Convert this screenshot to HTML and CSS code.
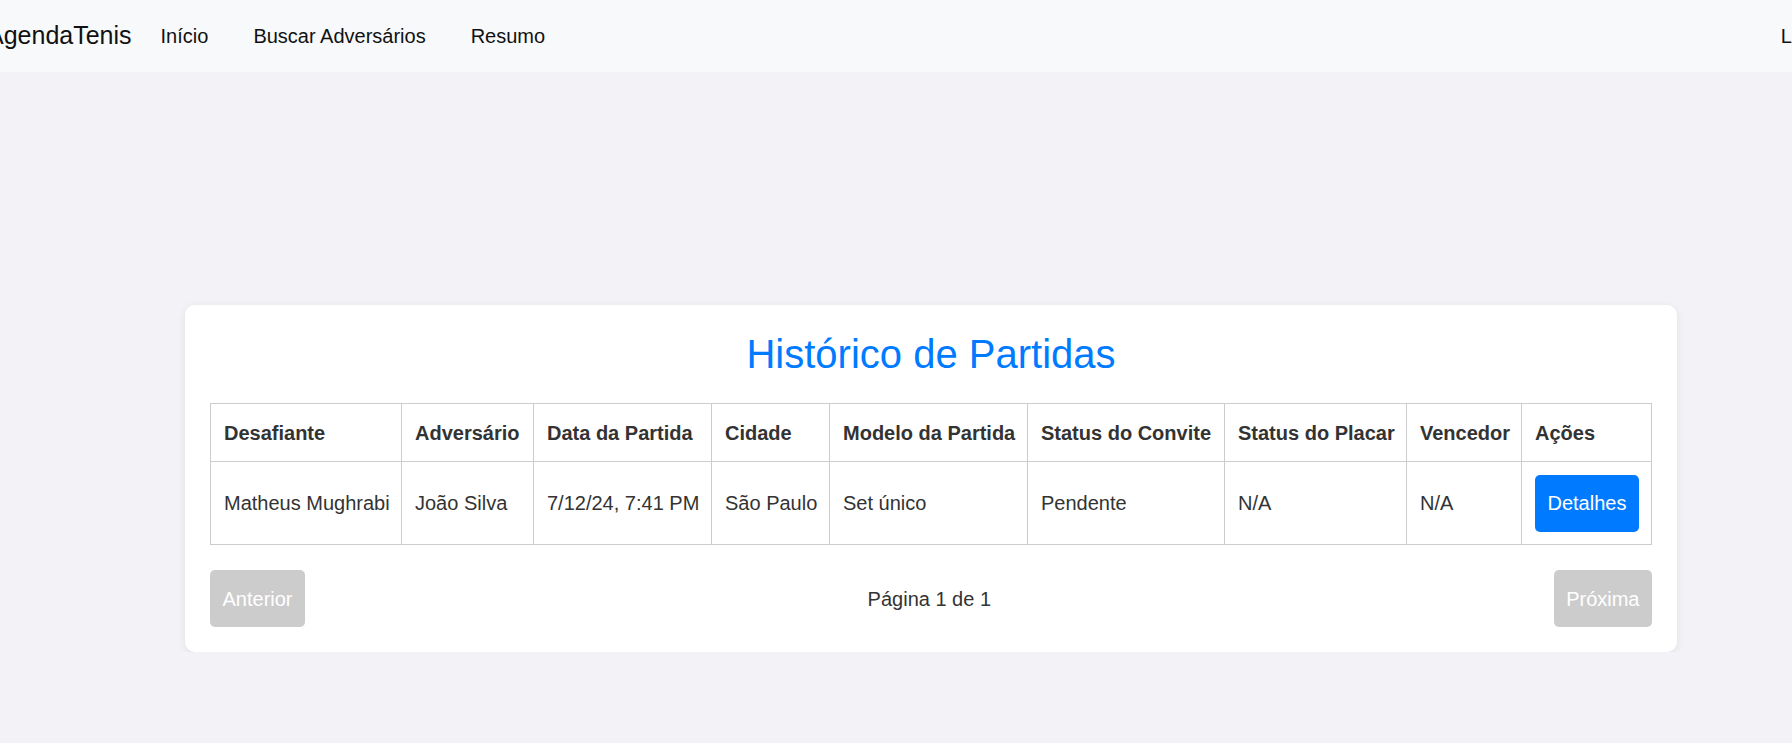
FILE: index.html
```html
<!DOCTYPE html>
<html lang="pt-BR">
<head>
<meta charset="utf-8">
<title>AgendaTenis - Histórico de Partidas</title>
<link rel="stylesheet" href="styles.css">
</head>
<body>
<nav class="navbar">
  <div class="nav-inner">
    <a class="brand" href="#">AgendaTenis</a>
    <ul class="nav-links">
      <li><a href="#">Início</a></li>
      <li><a href="#">Buscar Adversários</a></li>
      <li><a href="#">Resumo</a></li>
    </ul>
    <a class="nav-right" href="#">Logout</a>
  </div>
</nav>
<main class="main">
  <section class="card">
    <h2 class="title">Histórico de Partidas</h2>
    <table class="matches">
      <colgroup>
        <col class="c1"><col class="c2"><col class="c3"><col class="c4"><col class="c5"><col class="c6"><col class="c7"><col class="c8"><col class="c9">
      </colgroup>
      <thead>
        <tr>
          <th>Desafiante</th>
          <th>Adversário</th>
          <th>Data da Partida</th>
          <th>Cidade</th>
          <th>Modelo da Partida</th>
          <th>Status do Convite</th>
          <th>Status do Placar</th>
          <th>Vencedor</th>
          <th>Ações</th>
        </tr>
      </thead>
      <tbody>
        <tr>
          <td>Matheus Mughrabi</td>
          <td>João Silva</td>
          <td>7/12/24, 7:41 PM</td>
          <td>São Paulo</td>
          <td>Set único</td>
          <td>Pendente</td>
          <td>N/A</td>
          <td>N/A</td>
          <td><button class="btn btn-primary">Detalhes</button></td>
        </tr>
      </tbody>
    </table>
    <div class="pagination">
      <button class="btn btn-disabled" disabled>Anterior</button>
      <span class="page-info">Página 1 de 1</span>
      <button class="btn btn-disabled" disabled>Próxima</button>
    </div>
  </section>
</main>
</body>
</html>
```

FILE: styles.css
```css
* { box-sizing: border-box; }

html, body {
  margin: 0;
  padding: 0;
}

body {
  background: #f3f3f7;
  font-family: "Liberation Sans", Arial, sans-serif;
  font-size: 20px;
  line-height: 1.5;
  color: #333;
  overflow: hidden;
}

.navbar {
  height: 72px;
  background: #f8f9fa;
  overflow: hidden;
}

.nav-inner {
  display: flex;
  align-items: center;
  height: 72px;
  margin-left: -13px;
  width: 1855px;
}

.brand {
  font-size: 25px;
  color: #111;
  text-decoration: none;
  line-height: 1.5;
  margin-right: 29px;
}

.nav-links {
  display: flex;
  gap: 45px;
  list-style: none;
  margin: 0;
  padding: 0;
}

.nav-links a,
.nav-right {
  color: #111;
  text-decoration: none;
  font-size: 20px;
}

.nav-right {
  margin-left: auto;
}

.main {
  padding: 233px 0 0 185px;
}

.card {
  width: 1492px;
  background: #fff;
  border-radius: 10px;
  box-shadow: 0 2px 8px rgba(0, 0, 0, 0.08);
  padding: 25px;
}

.title {
  margin: 0 0 25px;
  text-align: center;
  font-size: 40px;
  font-weight: 400;
  line-height: 1.2;
  color: #007bff;
}

.matches {
  width: 100%;
  border-collapse: collapse;
  table-layout: fixed;
}

.c1 { width: 191px; }
.c2 { width: 132px; }
.c3 { width: 178px; }
.c4 { width: 118px; }
.c5 { width: 198px; }
.c6 { width: 197px; }
.c7 { width: 182px; }
.c8 { width: 115px; }
.c9 { width: 130px; }

.matches th,
.matches td {
  border: 1px solid #cccccc;
  text-align: left;
  white-space: nowrap;
  vertical-align: middle;
  line-height: 30px;
}

.matches th {
  padding: 13.5px 13px;
  font-weight: 700;
  color: #333;
}

.matches td {
  padding: 12.5px 13px;
  color: #333;
}

.btn {
  font-family: "Liberation Sans", Arial, sans-serif;
  font-size: 20px;
  line-height: 32px;
  padding: 12.5px;
  border: none;
  border-radius: 5px;
  color: #fff;
  display: inline-block;
  vertical-align: middle;
}

.btn-primary {
  background: #007bff;
}

.btn-disabled {
  background: #cccccc;
}

.pagination {
  margin-top: 25px;
  display: flex;
  justify-content: space-between;
  align-items: center;
}

.page-info {
  color: #333;
}
```
